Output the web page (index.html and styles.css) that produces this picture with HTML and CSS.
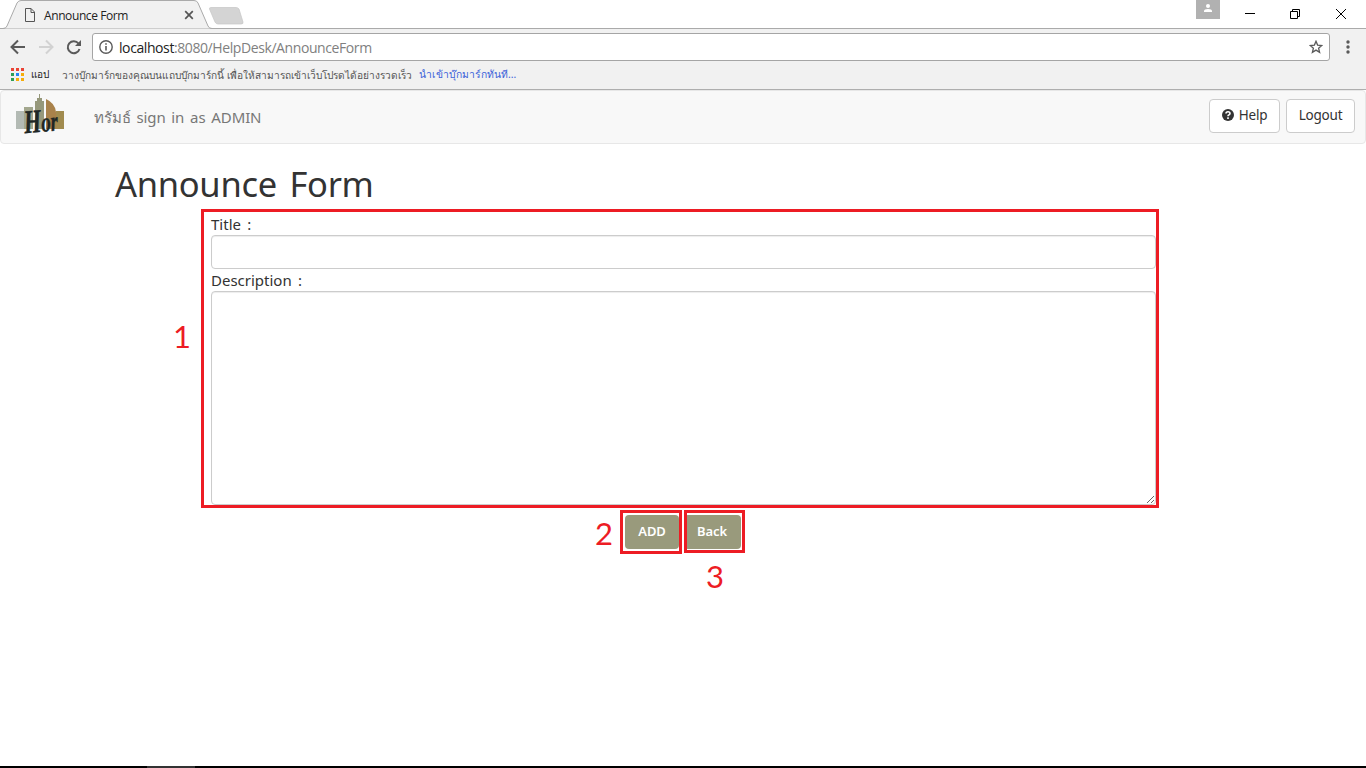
FILE: index.html
```html
<!DOCTYPE html>
<html lang="th">
<head>
<meta charset="utf-8">
<title>Announce Form</title>
<link rel="stylesheet" href="styles.css">
</head>
<body>
<div class="window">
  <header class="tabstrip">
    <svg class="tab-shape" width="250" height="29" viewBox="0 0 250 29">
      <path d="M0 28.500H3Q6 28.500 7 26L17 3Q18.500 .5 21 .5H194Q197 .5 198 3L208 26Q209 28.500 212 28.500H250" fill="#f1f1f1" stroke="#aaa"/>
      <path d="M211 7.500H236Q238 7.500 239 9L243 22Q243.500 24 241 24H218Q216 24 215 22L209.500 9Q209 7.500 211 7.500Z" fill="#d4d4d4" stroke="#c5c5c5" stroke-width=".7"/>
    </svg>
    <div class="tab">
      <svg width="12" height="14" viewBox="0 0 12 14" fill="none" stroke="#555"><path d="M1.500 .5H7L10.500 4V13.500H1.500ZM7 .5V4.500H10.500"/></svg>
      <span class="tab-title">Announce Form</span>
      <svg class="tab-close" width="10" height="10" viewBox="0 0 10 10" stroke="#555" stroke-width="1.700"><path d="M1.200 1.200L8.800 8.800M8.800 1.200L1.200 8.800"/></svg>
    </div>
    <div class="controls">
      <span class="profile"><svg width="10" height="9" viewBox="0 0 10 9" fill="#fff"><circle cx="5" cy="2" r="2"/><path d="M1 8V7Q1 5 5 5T9 7V8Z"/></svg></span>
      <svg class="win-icons" width="110" height="20" viewBox="0 0 110 20" fill="none" stroke="#000"><path d="M5 8.500H15M50.500 6.500H57.500V13.500H50.500ZM52.500 6V4.500H59.500V11.500H58M96 4L106 14M106 4L96 14"/></svg>
    </div>
  </header>
  <div class="toolbar">
    <svg class="nav-icons" width="82" height="24" viewBox="0 0 82 24" fill="none" stroke="#5a5a5a" stroke-width="2">
      <path d="M25 12H12M18 5.500L11.500 12L18 18.500"/>
      <path d="M39 12H52M46 5.500L52.500 12L46 18.500" stroke="#d2d2d2"/>
      <path d="M78.500 8.500A6 6 0 1 0 79.500 14"/><path d="M81 5V11H75Z" fill="#5a5a5a" stroke="none"/>
    </svg>
    <div class="address">
      <svg width="14" height="14" viewBox="0 0 14 14" fill="none" stroke="#5a5a5a" stroke-width="1.400"><circle cx="7" cy="7" r="6.200"/><path d="M7 6V10.500M7 3.300V4.800" stroke-width="1.600"/></svg>
      <span class="url"><b>localhost</b>:8080/HelpDesk/AnnounceForm</span>
      <svg class="star" width="14" height="14" viewBox="0 0 14 14" fill="none" stroke="#5a5a5a" stroke-width="1.300"><path d="M7 1.300L8.600 5.100L12.800 5.500L9.600 8.200L10.600 12.300L7 10.100L3.400 12.300L4.400 8.200L1.200 5.500L5.400 5.100Z"/></svg>
    </div>
    <svg class="dots" width="4" height="14" viewBox="0 0 4 14" fill="#5a5a5a"><circle cx="2" cy="2" r="1.700"/><circle cx="2" cy="7" r="1.700"/><circle cx="2" cy="12" r="1.700"/></svg>
  </div>
  <div class="bookmarks">
    <svg width="13" height="13" viewBox="0 0 13 13"><path d="M0 0h3v3H0zM5 0h3v3H5zM10 0h3v3h-3z" fill="#ea4335"/><path d="M0 5h3v3H0zM0 10h3v3H0z" fill="#2e9e57"/><path d="M5 5h3v3H5z" fill="#2684f5"/><path d="M10 5h3v3h-3zM5 10h3v3H5zM10 10h3v3h-3z" fill="#f6ad0a"/></svg>
    <span class="apps">แอป</span>
    <span class="hint">วางบุ๊กมาร์กของคุณบนแถบบุ๊กมาร์กนี้ เพื่อให้สามารถเข้าเว็บโปรดได้อย่างรวดเร็ว</span>
    <a class="import">นำเข้าบุ๊กมาร์กทันที...</a>
  </div>
  <nav class="navbar">
    <svg class="logo" width="50" height="44" viewBox="0 0 50 44">
      <path d="M1 17h8v18H1z" fill="#b3bab4"/><path d="M9 13h9v22H9z" fill="#a3a78e"/>
      <path d="M20 35V7h2V4h2V0h1v4h2v3h2v28z" fill="#96987b"/>
      <path d="M31 35V5Q40 9 41 18V35z" fill="#a9824b"/><path d="M41 17h8v18h-8z" fill="#a18b4f"/>
      <text class="logo-text" x="9" y="38" textLength="34" lengthAdjust="spacingAndGlyphs" transform="rotate(-5 25 30)"><tspan class="logo-cap">H</tspan>or</text>
    </svg>
    <span class="signed">ทรัมธ์ sign in as ADMIN</span>
    <button class="btn help"><svg width="12" height="12" viewBox="0 0 12 12"><circle cx="6" cy="6" r="6" fill="#333"/><path d="M4 4.500Q4 2.700 6 2.700T8 4.400Q8 5.400 6.700 6Q6 6.300 6 7.300M6 8.300V10" fill="none" stroke="#fff" stroke-width="1.600"/></svg><span>Help</span></button>
    <button class="btn logout"><span>Logout</span></button>
  </nav>
  <main class="content">
    <h1><span>Announce Form</span></h1>
    <form class="form">
      <label><span>Title :</span></label>
      <input class="field" type="text">
      <label><span>Description :</span></label>
      <textarea class="field area"></textarea>
      <div class="actions"><button type="button" class="olive add">ADD</button><button type="button" class="olive back">Back</button></div>
    </form>
  </main>
  <footer class="taskbar"><i></i></footer>
  <div class="mark mark-form"></div><div class="mark mark-add"></div><div class="mark mark-back"></div>
  <span class="num n1">1</span><span class="num n2">2</span><span class="num n3">3</span>
</div>
</body>
</html>
```
FILE: styles.css
```css
* { box-sizing: border-box; }
body { margin: 0; overflow: hidden; background: #fff; color: #333; font-family: "Noto Sans", "Open Sans", sans-serif; }
svg { display: block; flex: none; }
span, a { white-space: nowrap; }
.window { position: relative; width: 1366px; height: 768px; display: flex; flex-direction: column; }
.tabstrip { position: relative; height: 29px; flex: none; display: flex; justify-content: space-between; border-bottom: 1px solid #aaa; }
.tab-shape { position: absolute; left: 0; top: 0; }
.tab { position: relative; width: 200px; height: 29px; padding: 1px 6px 0 24px; display: flex; align-items: center; }
.tab-title { margin-left: 8px; color: #222; font: 12px "Open Sans", sans-serif; letter-spacing: -.4px; }
.tab-close { margin-left: auto; }
.controls { display: flex; width: 170px; }
.profile { width: 24px; height: 19px; background: #b1b1b1; display: flex; justify-content: center; padding-top: 4px; }
.win-icons { margin: 5px 0 0 20px; }
.toolbar { height: 34px; flex: none; background: #f1f1f1; display: flex; padding-top: 4px; }
.nav-icons { margin-top: 2px; }
.address { width: 1238px; height: 28px; margin-left: 10px; padding: 0 6px; border: 1px solid #a5a5a5; border-radius: 3px; background: #fff; display: flex; align-items: center; }
.url { margin-left: 6px; color: #808080; font: 14px "Open Sans", sans-serif; letter-spacing: -.41px; }
.url b { font-weight: 400; color: #222; }
.star { margin-left: auto; }
.dots { margin: 7px 0 0 16px; }
.bookmarks { height: 27px; flex: none; background: #f1f1f1; border-bottom: 1px solid #aeaeae; display: flex; align-items: center; padding: 0 0 3px 11px; font-size: 11px; color: #555; }
.apps { margin-left: 7px; color: #222; width: 20px; font-size: 10px; }
.hint { margin-left: 11px; width: 353px; font-size: 10.150px; }
.import { margin-left: 4px; color: #3c62d9; font-size: 10.300px; }
.navbar { height: 54px; flex: none; background: #f8f8f8; border: 1px solid #e7e7e7; border-radius: 4px; display: flex; padding: 0 10px 0 14px; }
.logo { margin-top: 3px; overflow: visible; }
.logo-text { font: italic 700 28px "Liberation Serif", serif; fill: #202725; stroke: #202725; stroke-width: .4; }
.logo-cap { font-size: 33px; }
.signed { margin: 15px auto 0 29px; font-size: 15px; line-height: 22px; letter-spacing: -.1px; word-spacing: 2px; color: #777; }
.btn { height: 34px; margin-top: 8px; padding: 0 0 2px; border: 1px solid #ccc; border-radius: 4px; background: #fff; color: #333; font: 13.500px "Noto Sans", sans-serif; letter-spacing: -.2px; display: flex; align-items: center; justify-content: center; gap: 5px; }
.help { width: 71px; }
.logout { width: 69px; margin-left: 6px; }
.content { flex: 1; padding: 20px 98px 0 115px; }
h1 { margin: 0; height: 51px; font-size: 34.500px; line-height: 40px; font-weight: 400; letter-spacing: -.3px; word-spacing: 4px; }
.form { width: 946px; margin-left: 96px; display: flex; flex-direction: column; }
label { height: 20px; font-size: 15px; line-height: 18px; word-spacing: 2.500px; }
.field { width: 945px; height: 34px; margin: 0 0 2px; border: 1px solid #ccc; border-radius: 4px; background: #fff; box-shadow: inset 0 1px 1px rgba(0,0,0,.075); outline: 0; }
.area { height: 214px; resize: both; margin-bottom: 10px; }
.actions { display: flex; margin-left: 414px; gap: 5px; }
.olive { width: 54px; height: 34px; border: 0; border-radius: 4px; padding: 0 0 2px; background: #999a7c; color: #fff; font: 600 13px "Noto Sans", sans-serif; letter-spacing: -.1px; }
.back { width: 57px; padding-right: 1px; }
.taskbar { height: 2px; background: #000; }
.taskbar i { display: block; width: 48px; height: 2px; margin-left: 147px; background: #333; }
.mark { position: absolute; border: 3px solid #ed1c24; pointer-events: none; }
.mark-form { left: 201px; top: 209px; width: 958px; height: 299px; }
.mark-add { left: 620px; top: 510px; width: 62px; height: 44px; }
.mark-back { left: 684px; top: 510px; width: 61px; height: 43px; }
.num { position: absolute; color: #ed1c24; font: 31px/36px Lato, sans-serif; }
.n1 { left: 173px; top: 318px; }
.n2 { left: 595px; top: 515px; }
.n3 { left: 706px; top: 558px; }
```
